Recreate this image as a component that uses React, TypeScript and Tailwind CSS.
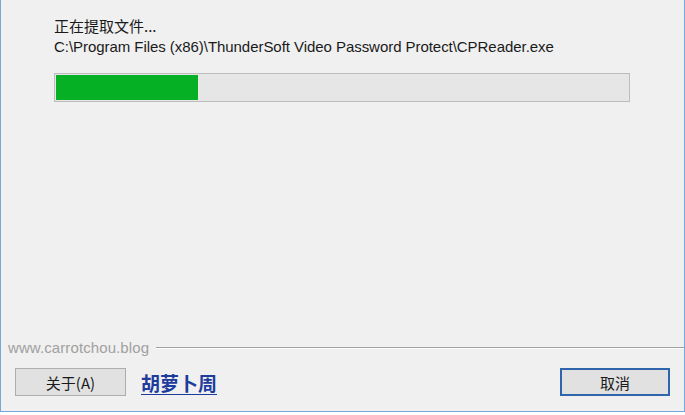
export default function App() {
  const cjk = { fontFamily: '"Noto Sans CJK SC", "Noto Sans", sans-serif' };
  return (
    <div className="w-[685px] h-[415px] bg-white">
      <div className="w-[685px] h-[412px] bg-[#f0f0f0] border-l border-r border-b border-[#74a8dc] flex flex-col">
        <div className="pl-[53px] pr-[53px] pt-[15px] flex flex-col">
          <div className="text-[15px] leading-[22px] text-[#1a1a1a]" style={cjk}>正在提取文件...</div>
          <div className="text-[15px] leading-[20px] text-[#1a1a1a] tracking-[-0.05px] whitespace-nowrap" style={{ fontFamily: '"Liberation Sans", "Noto Sans CJK SC", sans-serif' }}>
            C:\Program Files (x86)\ThunderSoft Video Password Protect\CPReader.exe
          </div>
          <div className="mt-[16px] w-[576px] h-[29px] border border-[#bcbcbc] bg-[#e6e6e6] p-px">
            <div className="h-full w-[142px] bg-[#06b025]" />
          </div>
        </div>
        <div className="flex-1" />
        <div className="flex items-center pl-[7px] h-[18px]">
          <span className="text-[15px] text-[#a0a0a0] whitespace-nowrap tracking-[0.1px]" style={{ fontFamily: '"Liberation Sans", sans-serif' }}>www.carrotchou.blog</span>
          <div className="flex-1 ml-[7px] border-t border-[#a0a0a0] border-b border-b-white" />
        </div>
        <div className="flex items-center pl-[14px] pr-[14px] h-[28px] mt-[11px] mb-[15px]">
          <button className="w-[111px] h-[28px] border border-[#adadad] bg-[#e1e1e1] text-[15px] text-[#1a1a1a] leading-none" style={cjk}>关于(A)</button>
          <a className="ml-[15px] text-[19px] font-bold text-[#1d3c9c] underline underline-offset-[3px] leading-none" style={cjk}>胡萝卜周</a>
          <div className="flex-1" />
          <button className="w-[110px] h-[28px] border-2 border-[#2f65ad] bg-[#e1e1e1] text-[15px] text-[#1a1a1a] leading-none" style={cjk}>取消</button>
        </div>
      </div>
    </div>
  );
}
